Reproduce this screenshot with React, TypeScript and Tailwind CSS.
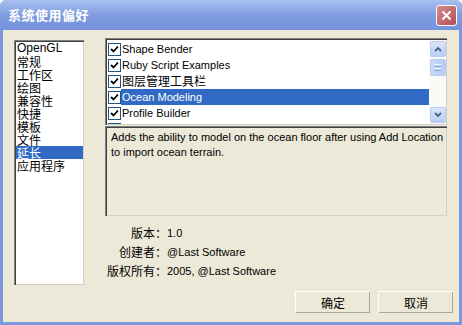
import React from "react";

const cjk = { fontFamily: '"Noto Sans CJK SC", "Liberation Sans", sans-serif' };
const latin = { fontFamily: '"Liberation Sans", "Noto Sans CJK SC", sans-serif' };

function Check() {
  return (
    <span className="w-[13px] h-[13px] shrink-0 bg-white border border-[#1C5180] flex items-center justify-center">
      <svg width="9" height="9" viewBox="0 0 9 9">
        <path d="M1 4 L3.5 6.5 L8 1.5" stroke="#000" strokeWidth="1.8" fill="none" />
      </svg>
    </span>
  );
}

function ArrowBtn({ up }: { up?: boolean }) {
  return (
    <div className="w-[16px] h-[16px] rounded-[2px] border border-[#B9CAF3] bg-gradient-to-b from-[#DCE6FB] to-[#B9CDF7] flex items-center justify-center">
      <svg width="8" height="6" viewBox="0 0 8 6">
        <path d={up ? "M1 5 L4 2 L7 5" : "M1 1 L4 4 L7 1"} stroke="#4D6185" strokeWidth="1.8" fill="none" />
      </svg>
    </div>
  );
}

const leftItems = ["OpenGL", "常规", "工作区", "绘图", "兼容性", "快捷", "模板", "文件", "延长", "应用程序"];
const rightItems = ["Shape Bender", "Ruby Script Examples", "图层管理工具栏", "Ocean Modeling", "Profile Builder", "Sandbox Tools"];

const sunken =
  "border-t border-l border-[#808080] border-r-white border-b-white shadow-[inset_1px_1px_0_#404040,inset_-1px_-1px_0_#D4D0C8]";

function Button({ label }: { label: string }) {
  return (
    <div
      className="w-[75px] h-[22px] flex items-center justify-center text-[12px] text-black bg-[#ECE9D8] border-t border-l border-white border-r-[#404040] border-b-[#404040] shadow-[inset_-1px_-1px_0_#ACA899]"
      style={cjk}
    >
      {label}
    </div>
  );
}

export default function App() {
  return (
    <div className="w-[462px] h-[325px] bg-[#7B98DF] flex flex-col overflow-hidden rounded-t-[6px]">
      <div className="h-[30px] shrink-0 bg-gradient-to-b from-[#A9C2F0] via-[#7F9CE0] to-[#7592DC] flex items-center justify-between pl-[8px] pr-[5px]">
        <span className="text-white text-[13px] font-bold tracking-[0.5px]" style={cjk}>
          系统使用偏好
        </span>
        <div className="w-[21px] h-[21px] rounded-[3px] border border-white bg-gradient-to-br from-[#D38C8C] to-[#B04E55] flex items-center justify-center">
          <svg width="11" height="11" viewBox="0 0 11 11">
            <path d="M1.5 1.5 L9.5 9.5 M9.5 1.5 L1.5 9.5" stroke="#fff" strokeWidth="2" />
          </svg>
        </div>
      </div>
      <div className="flex-1 mx-[3px] mb-[3px] bg-[#ECE9D8] flex flex-col pl-[11px] pr-[6px]">
        <div className="flex gap-[21px] mt-[8px]">
          <div className={`w-[70px] h-[245px] mt-[2px] bg-white ${sunken} pt-[1px] px-[1px]`}>
            {leftItems.map((t, i) => (
              <div
                key={t}
                className={`h-[13px] leading-[13px] text-[12px] pl-[1px] ${i === 8 ? "bg-[#316AC5] text-white" : "text-black"}`}
                style={i === 0 ? latin : cjk}
              >
                {t}
              </div>
            ))}
          </div>
          <div className="w-[342px] flex flex-col">
            <div className={`h-[87px] bg-white ${sunken} flex p-[1px]`}>
              <div className="flex-1 overflow-hidden pt-[1px] pl-[1px]">
                {rightItems.map((t, i) => (
                  <div key={t} className="h-[16px] flex items-center">
                    <Check />
                    <span
                      className={`h-[16px] flex-1 leading-[16px] pl-[1px] ${i === 2 ? "text-[12px]" : "text-[11px]"} ${i === 3 ? "bg-[#316AC5] text-white" : "text-black"}`}
                      style={i === 2 ? cjk : latin}
                    >
                      {t}
                    </span>
                  </div>
                ))}
              </div>
              <div className="w-[17px] bg-[#FAFAF7] flex flex-col items-center justify-between py-[1px]">
                <div className="flex flex-col gap-[2px] items-center">
                  <ArrowBtn up />
                  <div className="w-[16px] h-[17px] rounded-[2px] border border-[#B9CAF3] bg-gradient-to-r from-[#C9D8FA] to-[#B7CBF6] flex flex-col items-center justify-center gap-[1px]">
                    <div className="w-[7px] h-[1px] bg-[#EEF3FE]" />
                    <div className="w-[7px] h-[1px] bg-[#8CA6DD]" />
                    <div className="w-[7px] h-[1px] bg-[#EEF3FE]" />
                    <div className="w-[7px] h-[1px] bg-[#8CA6DD]" />
                  </div>
                </div>
                <ArrowBtn />
              </div>
            </div>
            <div className={`h-[90px] mt-[1px] ${sunken} pl-[5px] pt-[3px]`}>
              <p className="text-[11px] leading-[15px] text-black whitespace-nowrap" style={latin}>
                Adds the ability to model on the ocean floor after using Add Location
                <br />
                to import ocean terrain.
              </p>
            </div>
            <div className="mt-[9px] flex flex-col gap-[3px] text-[12px] text-black">
              {[
                ["版本：", "1.0"],
                ["创建者：", "@Last Software"],
                ["版权所有：", "2005, @Last Software"],
              ].map(([k, v]) => (
                <div key={k} className="flex h-[16px] items-center">
                  <span className="w-[62px] text-right" style={cjk}>
                    {k}
                  </span>
                  <span className="text-[11px]" style={latin}>
                    {v}
                  </span>
                </div>
              ))}
            </div>
          </div>
        </div>
        <div className="flex justify-end gap-[8px] mt-auto mb-[9px]">
          <Button label="确定" />
          <Button label="取消" />
        </div>
      </div>
    </div>
  );
}
